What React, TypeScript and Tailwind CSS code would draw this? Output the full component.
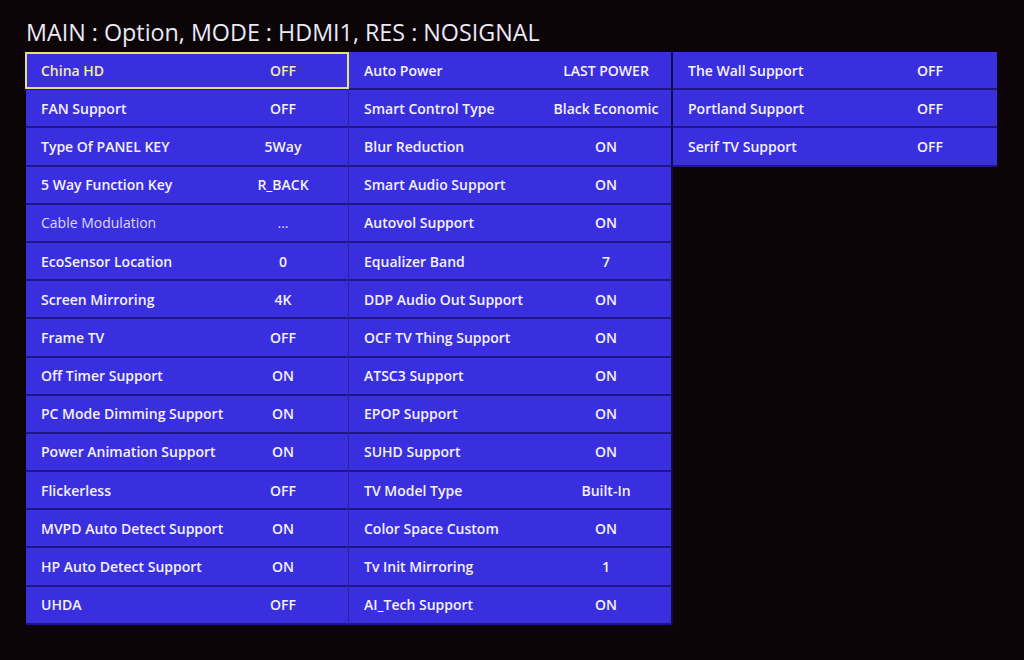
import React from "react";

type Item = { label: string; value: string; dim?: boolean; selected?: boolean };

const col1: Item[] = [
  { label: "China HD", value: "OFF", selected: true },
  { label: "FAN Support", value: "OFF" },
  { label: "Type Of PANEL KEY", value: "5Way" },
  { label: "5 Way Function Key", value: "R_BACK" },
  { label: "Cable Modulation", value: "...", dim: true },
  { label: "EcoSensor Location", value: "0" },
  { label: "Screen Mirroring", value: "4K" },
  { label: "Frame TV", value: "OFF" },
  { label: "Off Timer Support", value: "ON" },
  { label: "PC Mode Dimming Support", value: "ON" },
  { label: "Power Animation Support", value: "ON" },
  { label: "Flickerless", value: "OFF" },
  { label: "MVPD Auto Detect Support", value: "ON" },
  { label: "HP Auto Detect Support", value: "ON" },
  { label: "UHDA", value: "OFF" },
];

const col2: Item[] = [
  { label: "Auto Power", value: "LAST POWER" },
  { label: "Smart Control Type", value: "Black Economic" },
  { label: "Blur Reduction", value: "ON" },
  { label: "Smart Audio Support", value: "ON" },
  { label: "Autovol Support", value: "ON" },
  { label: "Equalizer Band", value: "7" },
  { label: "DDP Audio Out Support", value: "ON" },
  { label: "OCF TV Thing Support", value: "ON" },
  { label: "ATSC3 Support", value: "ON" },
  { label: "EPOP Support", value: "ON" },
  { label: "SUHD Support", value: "ON" },
  { label: "TV Model Type", value: "Built-In" },
  { label: "Color Space Custom", value: "ON" },
  { label: "Tv Init Mirroring", value: "1" },
  { label: "AI_Tech Support", value: "ON" },
];

const col3: Item[] = [
  { label: "The Wall Support", value: "OFF" },
  { label: "Portland Support", value: "OFF" },
  { label: "Serif TV Support", value: "OFF" },
];

function Row({ item }: { item: Item }) {
  const text = item.selected
    ? "text-[#f2eea6]"
    : item.dim
    ? "text-[#dcd9f4] font-medium"
    : "text-[#f4f2ff]";
  return (
    <div
      className={`relative flex h-[38.2px] items-center bg-[#3a2fdf] border-b-[2px] border-[#1d1684] ${text}`}
    >
      {item.selected && (
        <div className="pointer-events-none absolute -left-px -right-px top-0 bottom-[-1px] border-2 border-[#e6e27a]" />
      )}
      <span className="pl-[15px] w-[192px] whitespace-nowrap">{item.label}</span>
      <span className="w-[130px] text-center whitespace-nowrap">{item.value}</span>
    </div>
  );
}

function Column({ items, width }: { items: Item[]; width: string }) {
  return (
    <div className={`flex flex-col ${width}`}>
      {items.map((it) => (
        <Row key={it.label} item={it} />
      ))}
    </div>
  );
}

export default function App() {
  return (
    <div
      className="h-[660px] w-[1024px] overflow-hidden bg-[#0b0508] pl-[26px] pt-[17px]"
      style={{ fontFamily: '"Open Sans", "Noto Sans", sans-serif' }}
    >
      <h1 className="h-[35px] text-[23.3px] leading-[31px] font-normal text-[#ece8f6]">
        MAIN : Option, MODE : HDMI1, RES : NOSIGNAL
      </h1>
      <div className="flex items-start text-[14px] font-semibold">
        <Column items={col1} width="w-[322px]" />
        <div className="w-px self-stretch bg-[#2a229e]" />
        <Column items={col2} width="w-[322px]" />
        <div className="w-[2px] self-stretch bg-[#140d48]" />
        <Column items={col3} width="w-[324px]" />
      </div>
    </div>
  );
}
